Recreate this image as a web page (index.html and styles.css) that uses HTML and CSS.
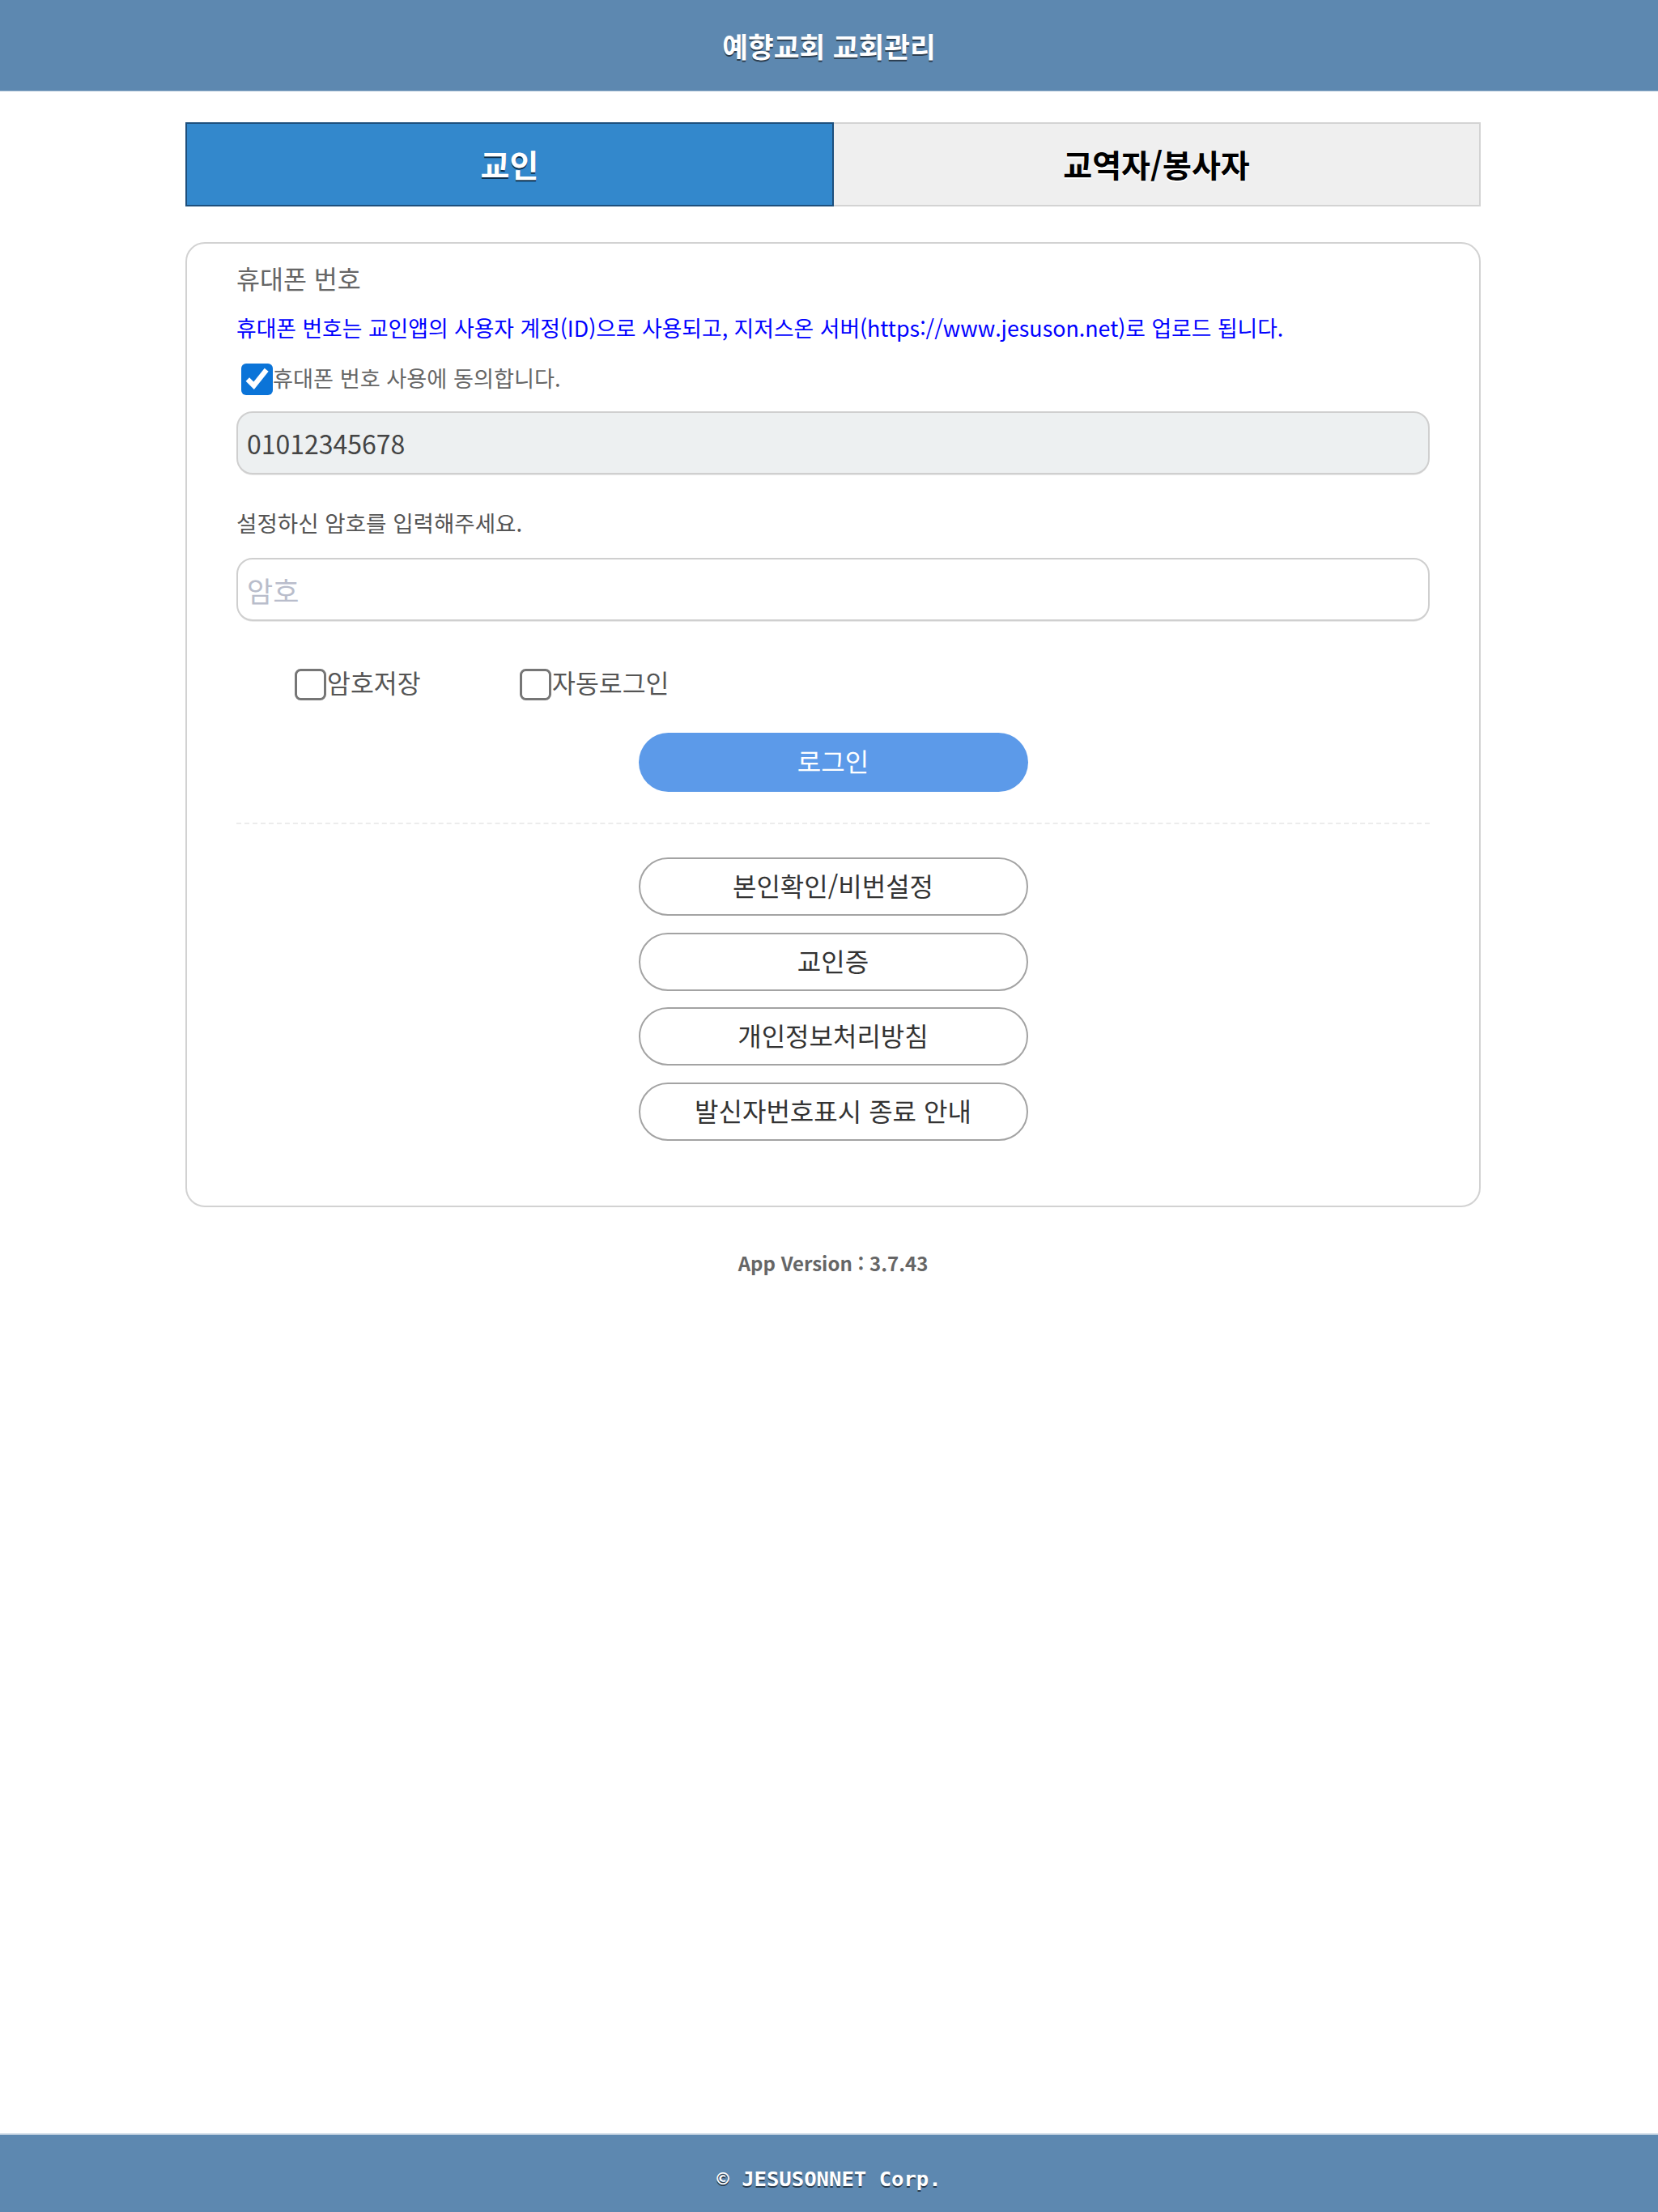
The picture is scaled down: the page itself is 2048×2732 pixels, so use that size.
FILE: index.html
```html
<!DOCTYPE html>
<html lang="ko">
<head>
    <meta charset="UTF-8">
    <meta name="viewport" content="width=device-width, initial-scale=1.0">
    <title>예향교회 교회관리</title>
    <link rel="stylesheet" href="styles.css">
</head>
<body>

    <div class="header">
        <h1>예향교회 교회관리</h1>
    </div>

    <div class="main">
        <div class="tabs">
            <a class="tab active" href="#">교인</a>
            <a class="tab" href="#">교역자/봉사자</a>
        </div>

        <div class="login-box">
            <div class="field-title">휴대폰 번호</div>
            <div class="notice">휴대폰 번호는 교인앱의 사용자 계정(ID)으로 사용되고, 지저스온 서버(https://www.jesuson.net)로 업로드 됩니다.</div>
            <label class="agree">
                <input type="checkbox" checked>
                <span>휴대폰 번호 사용에 동의합니다.</span>
            </label>
            <input class="text-input phone" type="text" value="01012345678" readonly>

            <div class="field-desc">설정하신 암호를 입력해주세요.</div>
            <input class="text-input password" type="password" placeholder="암호">

            <div class="options">
                <label class="option"><input type="checkbox"><span>암호저장</span></label>
                <label class="option"><input type="checkbox"><span>자동로그인</span></label>
            </div>

            <button class="btn-login" type="button">로그인</button>

            <div class="divider"></div>

            <div class="menu">
                <button class="btn-menu" type="button">본인확인/비번설정</button>
                <button class="btn-menu" type="button">교인증</button>
                <button class="btn-menu" type="button">개인정보처리방침</button>
                <button class="btn-menu" type="button">발신자번호표시 종료 안내</button>
            </div>
        </div>

        <div class="version">App Version : 3.7.43</div>
    </div>

    <div class="footer">
        <span>© JESUSONNET Corp.</span>
    </div>

</body>
</html>
```

FILE: styles.css
```css
* {
    margin: 0;
    padding: 0;
    box-sizing: border-box;
}

body {
    font-family: "Noto Sans CJK KR", "Noto Sans", sans-serif;
    background-color: #fff;
    color: #333;
    min-height: 100vh;
    display: flex;
    flex-direction: column;
}

.header {
    background-color: #5d88b0;
    border-bottom: 1px solid #b9cbdc;
    height: 113px;
    display: flex;
    align-items: center;
    justify-content: center;
}

.header h1 {
    color: #fff;
    font-size: 34.5px;
    font-weight: bold;
    text-shadow: 0 2px 0 #2b3d4f;
}

.main {
    flex: 1;
    width: 1600px;
    margin: 38px 0 0 229px;
}

.tabs {
    display: flex;
    height: 104px;
}

.tab {
    flex: 1;
    display: flex;
    align-items: center;
    justify-content: center;
    font-size: 39px;
    font-weight: bold;
    text-decoration: none;
    color: #000;
    background-color: #efefef;
    border: 2px solid #d3d3d3;
    border-left: none;
    text-shadow: 0 2px 0 #fff;
    padding-bottom: 3px;
}

.tab.active {
    color: #fff;
    background-color: #3388cc;
    border: 2px solid #1d4f7c;
    text-shadow: 0 2px 0 #0c2f4d;
}

.login-box {
    margin-top: 44px;
    border: 2px solid #d2d2d2;
    border-radius: 24px;
    padding: 22px 61px 80px 61px;
}

.field-title {
    font-size: 31.5px;
    line-height: 40px;
    color: #666;
}

.notice {
    margin-top: 24px;
    font-size: 26.8px;
    line-height: 36px;
    color: #0000ff;
}

.agree {
    margin-top: 25px;
    display: flex;
    align-items: center;
    height: 40px;
    font-size: 27.2px;
    color: #666;
}

.agree span,
.option span {
    padding-bottom: 5px;
}

input[type="checkbox"] {
    zoom: 3;
    margin: 0;
    accent-color: #0b74d8;
}

.agree input {
    margin-left: 2px;
}

.text-input {
    display: block;
    width: 100%;
    height: 78px;
    border: 2px solid #cfcfcf;
    border-radius: 20px;
    padding: 0 11px;
    font-family: inherit;
    font-size: 32px;
    color: #444;
    background-color: #fff;
    box-shadow: 0 2px 0 -1px #eaeaea;
    outline: none;
}

.text-input.password {
    font-size: 35px;
}

.text-input::placeholder {
    color: #b9bdcb;
}

.text-input.phone {
    margin-top: 20px;
    background-color: #edf0f1;
}

.field-desc {
    margin-top: 41px;
    font-size: 27.6px;
    line-height: 36px;
    color: #555;
}

.field-desc + .text-input {
    margin-top: 26px;
}

.options {
    margin-top: 58px;
    display: flex;
    padding-left: 72px;
}

.option {
    display: flex;
    align-items: center;
    min-width: 278px;
    height: 40px;
    font-size: 31.4px;
    color: #555;
}

.option span {
    margin-left: 1px;
}

.btn-login {
    display: block;
    width: 481px;
    height: 73px;
    margin: 40px auto 0;
    border: none;
    border-radius: 37px;
    background-color: #5c9ae9;
    color: #fff;
    font-family: inherit;
    font-size: 32px;
    padding-bottom: 5px;
    cursor: pointer;
}

.divider {
    margin-top: 38px;
    border-top: 2px dashed #ececec;
}

.menu {
    margin-top: 41px;
    display: flex;
    flex-direction: column;
    align-items: center;
    gap: 20.5px;
}

.btn-menu {
    width: 481px;
    height: 72px;
    border: 2px solid #a3a3a3;
    border-radius: 36px;
    background-color: #fff;
    color: #333;
    font-family: inherit;
    font-size: 32px;
    padding-bottom: 4px;
    cursor: pointer;
}

.version {
    margin-top: 51px;
    text-align: center;
    font-size: 24px;
    line-height: 36px;
    font-weight: bold;
    color: #666;
}

.footer {
    background-color: #5d88b0;
    border-top: 2px solid #b9cbdc;
    height: 97px;
    display: flex;
    align-items: center;
    justify-content: center;
    padding-top: 12px;
}

.footer span {
    color: #fff;
    font-family: "DejaVu Sans Mono", monospace;
    font-size: 25.6px;
    font-weight: bold;
    text-shadow: 0 2px 0 #2b3d4f;
}
```
